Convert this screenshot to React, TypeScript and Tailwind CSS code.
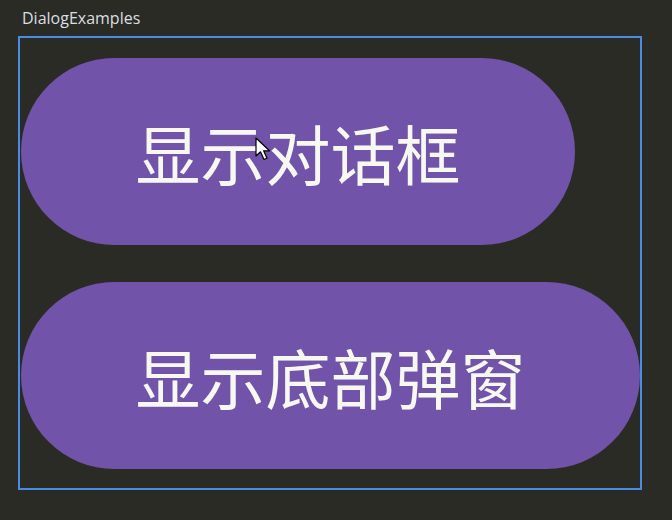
import * as React from "react";

const cjk = { fontFamily: '"Noto Sans CJK SC", "Noto Sans", sans-serif' };

function Cursor() {
  return (
    <svg
      className="absolute left-[255px] top-[137px]"
      width="20"
      height="26"
      viewBox="0 0 20 26"
    >
      <path
        d="M1 1 L1 19 L5.5 14.8 L9 22.5 L12 21.2 L8.6 13.8 L14.5 13.8 Z"
        fill="#ffffff"
        stroke="#000000"
        strokeWidth="1.2"
        strokeLinejoin="round"
      />
    </svg>
  );
}

export default function App() {
  return (
    <div className="relative h-[520px] w-[672px] overflow-hidden bg-[#2a2b24] font-['Open_Sans',sans-serif]">
      <div className="pl-[22px] pt-[8px] text-[16px] leading-[20px] text-[#dadfe2]">
        DialogExamples
      </div>
      <div className="ml-[18px] mt-[8px] flex h-[454px] w-[624px] flex-col gap-[37px] border-2 border-[#4b8be4] pl-px pt-[20px]">
        <button
          className="flex h-[187px] w-[554px] items-center justify-center rounded-full bg-[#7153a9] pt-[2px] text-[65px] leading-none text-[#f8f8f2]"
          style={cjk}
        >
          显示对话框
        </button>
        <button
          className="flex h-[187px] w-[619px] items-center justify-center rounded-full bg-[#7153a9] pt-[2px] text-[65px] leading-none text-[#f8f8f2]"
          style={cjk}
        >
          显示底部弹窗
        </button>
      </div>
      <Cursor />
    </div>
  );
}
